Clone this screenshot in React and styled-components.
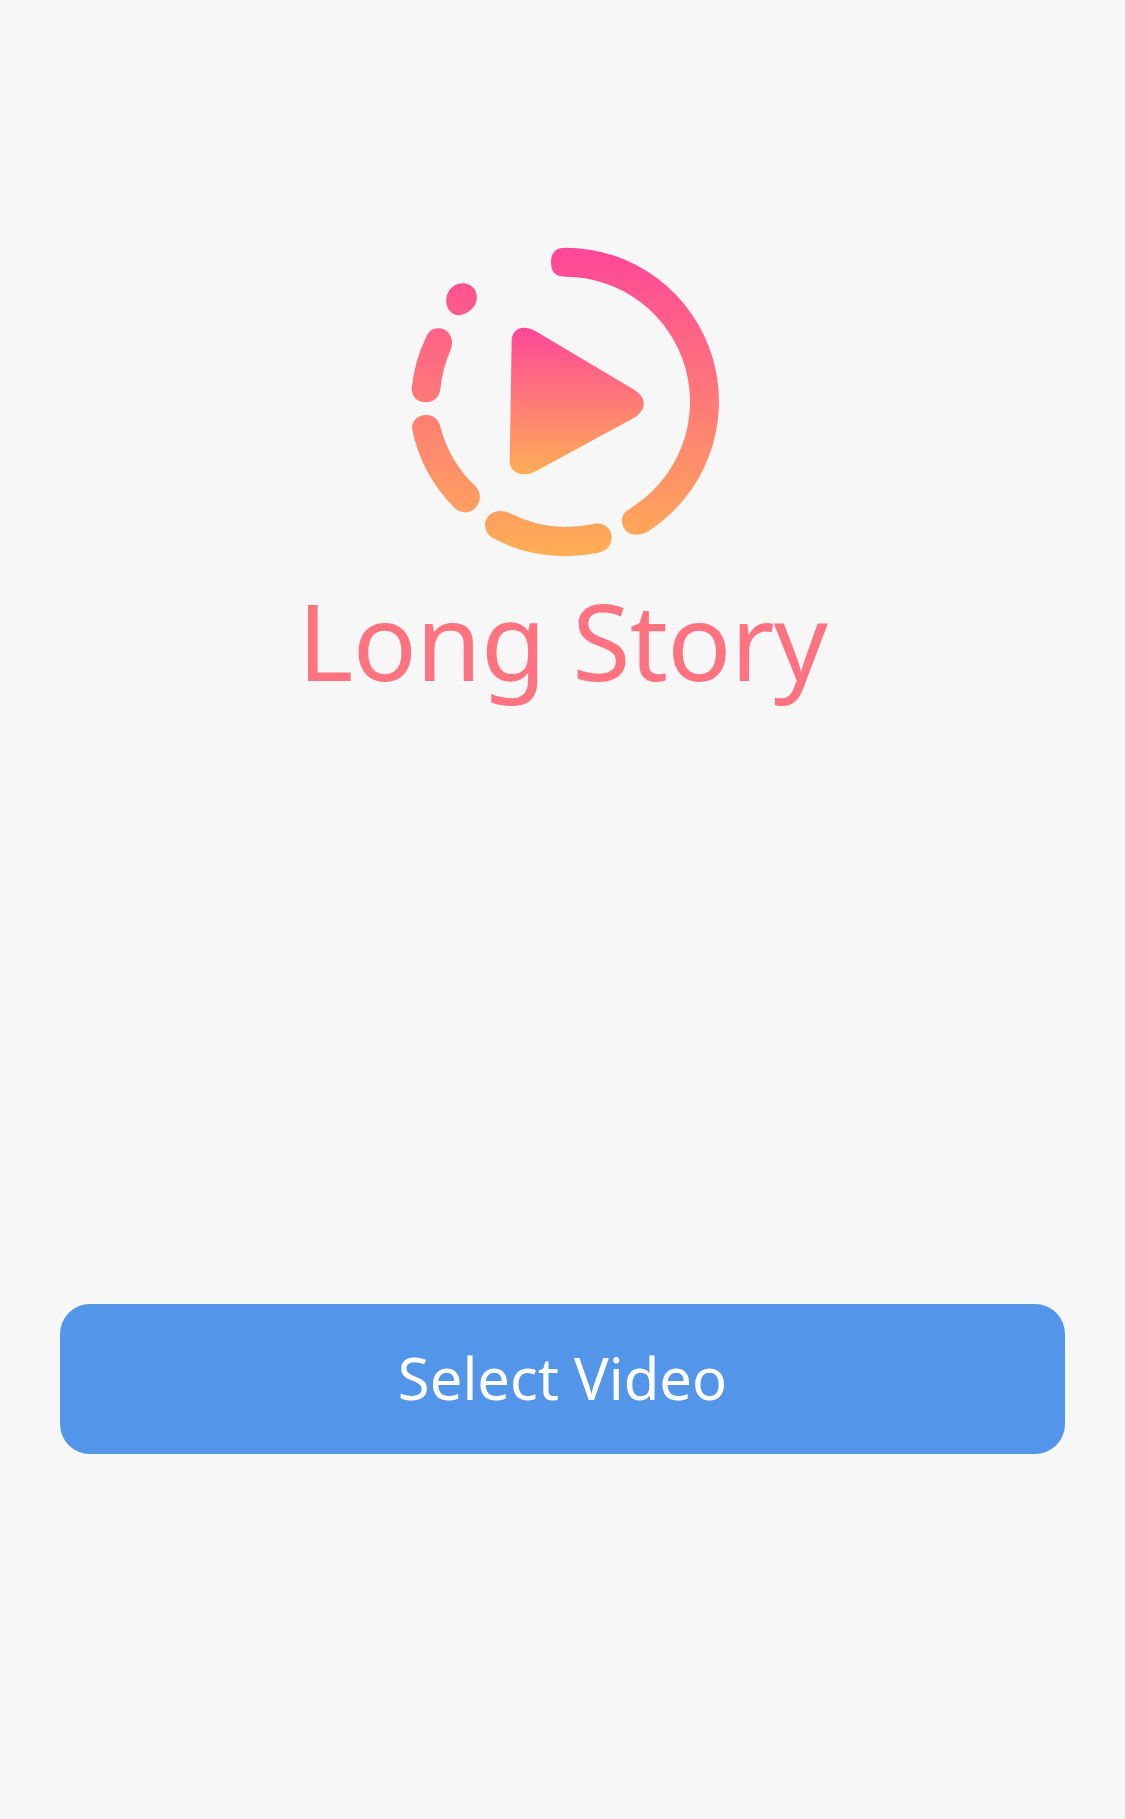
import React from "react";
import styled, { createGlobalStyle } from "styled-components";

const GlobalStyle = createGlobalStyle`
  html, body {
    margin: 0;
    padding: 0;
    background-color: #f7f7f7;
  }
`;

const Screen = styled.div`
  width: 1125px;
  height: 1819px;
  display: flex;
  flex-direction: column;
  align-items: center;
  background-color: #f7f7f7;
  font-family: "Noto Sans", "Open Sans", sans-serif;
  overflow: hidden;
`;

const Hero = styled.div`
  display: flex;
  flex-direction: column;
  align-items: center;
  flex: none;
  height: 1304px;
  padding-top: 230px;
  box-sizing: border-box;
`;

const LogoMark = styled.svg`
  display: block;
  width: 350px;
  height: 340px;
  margin-left: 5px;
`;

const Title = styled.h1`
  margin: -4px 0 0;
  font-size: 106px;
  font-weight: 400;
  line-height: 148px;
  letter-spacing: -0.7px;
  color: #ff7380;
  white-space: nowrap;
`;

const SelectButton = styled.button`
  flex: none;
  width: 1005px;
  height: 150px;
  border: none;
  border-radius: 30px;
  background-color: #5295e9;
  color: #ffffff;
  font-family: inherit;
  font-size: 58px;
  font-weight: 400;
  padding: 0 0 3px;
`;

const Logo = () => (
  <LogoMark viewBox="0 0 1050 1020" aria-label="Long Story logo">
    <defs>
      <linearGradient id="ring" gradientUnits="userSpaceOnUse" x1="0" y1="52" x2="0" y2="978">
        <stop offset="0" stopColor="#ff4699" />
        <stop offset="1" stopColor="#ffae55" />
      </linearGradient>
      <linearGradient id="play" gradientUnits="userSpaceOnUse" x1="0" y1="292" x2="0" y2="737">
        <stop offset="0" stopColor="#ff4699" />
        <stop offset="1" stopColor="#ffae55" />
      </linearGradient>
    </defs>
    <g fill="url(#ring)">
      <path d="M525 53 A462 462 0 0 1 771 906 C735 925 697 910 696 872 C696 856 705 843 721.5 834.4 A375 375 0 0 0 525 140 C495 140 483 125 483 97 C483 68 497 53 525 53 Z" />
      <path d="M180 178 C195 160 220 155 240 165 C262 178 268 210 250 232 C235 250 210 262 190 252 C168 240 160 205 180 178 Z" />
      <path d="M108 322 A462 462 0 0 0 65 475 C65 505 85 517 108 517 C130 517 148 503 151 478 A375 375 0 0 1 182 360 C195 325 175 295 145 295 C128 295 115 305 108 322 Z" />
      <path d="M66 595 C66 570 85 555 108 555 C130 555 146 568 151 590 A375 375 0 0 0 258 770 C275 790 272 815 258 832 C240 852 212 852 195 835 A462 462 0 0 1 66 595 Z" />
      <path d="M360 850 A375 375 0 0 0 610 882 C640 875 665 895 665 922 C665 945 650 964 625 968 A462 462 0 0 1 310 925 C292 915 285 900 285 882 C288 850 325 832 360 850 Z" />
    </g>
    <path
      fill="url(#play)"
      d="M365 335 C365 298 395 280 440 305 L730 478 C772 502 772 540 730 565 L440 722 C400 745 358 730 359 690 Z"
    />
  </LogoMark>
);

const App = () => (
  <Screen>
    <GlobalStyle />
    <Hero>
      <Logo />
      <Title>Long Story</Title>
    </Hero>
    <SelectButton>Select Video</SelectButton>
  </Screen>
);

export default App;
